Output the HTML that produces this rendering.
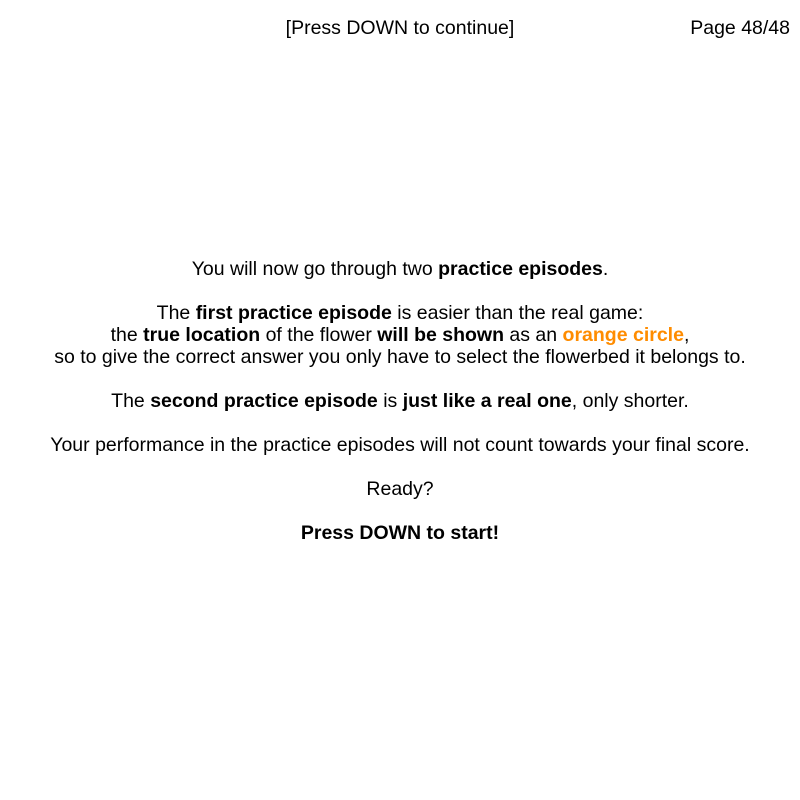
<!DOCTYPE html>
<html><head><meta charset="utf-8"><style>
html,body{margin:0;padding:0;background:#fff;width:800px;height:800px;overflow:hidden;font-family:"Liberation Sans",Arial,sans-serif;color:#000}
.hdr{position:absolute;top:17px;font-size:19.5px;line-height:22px}
#c{position:absolute;left:0;width:800px;top:258px;text-align:center;font-size:19.5px;line-height:22px}
.o{color:#ff8c00;font-weight:bold}
</style></head><body>
<div class="hdr" style="left:0;width:800px;text-align:center">[Press DOWN to continue]</div>
<div class="hdr" style="right:10px">Page 48/48</div>
<div id="c">
You will now go through two <b>practice episodes</b>.<br><br>
The <b>first practice episode</b> is easier than the real game:<br>
the <b>true location</b> of the flower <b>will be shown</b> as an <span class="o">orange circle</span>,<br>
so to give the correct answer you only have to select the flowerbed it belongs to.<br><br>
The <b>second practice episode</b> is <b>just like a real one</b>, only shorter.<br><br>
Your performance in the practice episodes will not count towards your final score.<br><br>
Ready?<br><br>
<b>Press DOWN to start!</b>
</div>
</body></html>
